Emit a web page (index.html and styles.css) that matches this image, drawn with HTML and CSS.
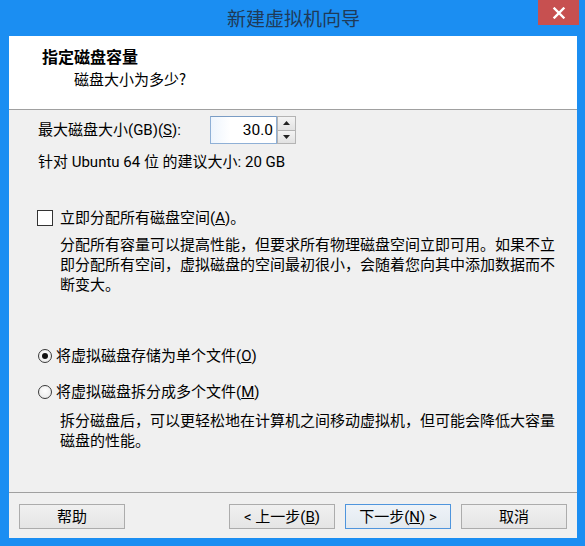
FILE: index.html
```html
<!DOCTYPE html>
<html lang="zh-CN">
<head>
<meta charset="utf-8">
<title>新建虚拟机向导</title>
<link rel="stylesheet" href="styles.css">
</head>
<body>
<div class="window">
  <div class="titlebar">
    <div class="title">新建虚拟机向导</div>
    <div class="close">
      <svg width="14" height="12" viewBox="0 0 14 12"><path d="M2.5 1.5 L11.5 10.5 M11.5 1.5 L2.5 10.5" stroke="#fff" stroke-width="2.4" stroke-linecap="square"/></svg>
    </div>
  </div>
  <div class="client">
    <div class="header">
      <div class="h-title">指定磁盘容量</div>
      <div class="h-sub">磁盘大小为多少?</div>
    </div>
    <div class="content">
      <div class="size-row">
        <span class="size-label">最大磁盘大小(GB)(<u>S</u>):</span>
        <div class="spin">
          <div class="spin-input">30.0</div>
          <div class="spin-btns">
            <div class="spin-btn"><svg width="7" height="4" viewBox="0 0 7 4"><path d="M0 4 L3.5 0 L7 4 Z" fill="#222"/></svg></div>
            <div class="spin-btn"><svg width="7" height="4" viewBox="0 0 7 4"><path d="M0 0 L3.5 4 L7 0 Z" fill="#222"/></svg></div>
          </div>
        </div>
      </div>
      <div class="hint">针对 Ubuntu 64 位 的建议大小: 20 GB</div>
      <label class="check-row">
        <span class="checkbox"></span>
        <span>立即分配所有磁盘空间(<u>A</u>)。</span>
      </label>
      <p class="desc desc1">分配所有容量可以提高性能，但要求所有物理磁盘空间立即可用。如果不立即分配所有空间，虚拟磁盘的空间最初很小，会随着您向其中添加数据而不断变大。</p>
      <label class="radio-row radio1">
        <span class="radio checked"></span>
        <span>将虚拟磁盘存储为单个文件(<u>O</u>)</span>
      </label>
      <label class="radio-row radio2">
        <span class="radio"></span>
        <span>将虚拟磁盘拆分成多个文件(<u>M</u>)</span>
      </label>
      <p class="desc desc2">拆分磁盘后，可以更轻松地在计算机之间移动虚拟机，但可能会降低大容量磁盘的性能。</p>
    </div>
    <div class="footer">
      <button class="btn">帮助</button>
      <div class="spacer"></div>
      <button class="btn">&lt; 上一步(<u>B</u>)</button>
      <button class="btn default">下一步(<u>N</u>) &gt;</button>
      <button class="btn">取消</button>
    </div>
  </div>
</div>
</body>
</html>
```

FILE: styles.css
```css
html, body {
  margin: 0;
  padding: 0;
}

body {
  width: 585px;
  height: 546px;
  overflow: hidden;
  font-family: Roboto, "Noto Sans CJK SC", sans-serif;
  font-size: 15px;
  color: #000;
}

.window {
  width: 585px;
  height: 546px;
  background: #1b8ef2;
  display: flex;
  flex-direction: column;
}

.titlebar {
  position: relative;
  height: 36px;
  flex: none;
  display: flex;
  align-items: center;
  justify-content: center;
}

.title {
  font-family: "Noto Sans CJK SC", sans-serif;
  font-size: 19px;
  color: #1f3a58;
  line-height: 36px;
  margin-left: 2px;
}

.close {
  position: absolute;
  top: 0;
  right: 6px;
  width: 41px;
  height: 25px;
  background: #c75050;
  display: flex;
  align-items: center;
  justify-content: center;
}

.client {
  flex: 1;
  margin: 0 8px 8px 9px;
  background: #f0f0f0;
  display: flex;
  flex-direction: column;
}

.header {
  flex: none;
  background: #fff;
  border-bottom: 1px solid #a0a0a0;
  box-sizing: border-box;
  height: 74px;
  padding: 10px 0 0 33px;
  font-family: "Noto Sans CJK SC", sans-serif;
}

.h-title {
  font-weight: bold;
  font-size: 16px;
  line-height: 20px;
}

.h-sub {
  margin: 3px 0 0 32px;
  font-size: 15px;
  line-height: 20px;
}

.content {
  flex: 1;
  padding: 6px 0 0 29px;
  line-height: 20px;
}

.size-row {
  display: flex;
  align-items: center;
  height: 28px;
}

.size-label {
  width: 172px;
  flex: none;
}

.spin {
  display: flex;
  height: 28px;
}

.spin-input {
  width: 67px;
  height: 28px;
  box-sizing: border-box;
  border: 1px solid #8fb0d6;
  border-top-color: #7a9cc4;
  background: linear-gradient(to right, #eef5fd, #fff 30%);
  text-align: right;
  padding-right: 3px;
  line-height: 26px;
  font-size: 15.5px;
}

.spin-btns {
  display: flex;
  flex-direction: column;
  width: 19px;
}

.spin-btn {
  flex: 1;
  border: 1px solid #b4b4b4;
  background: linear-gradient(#f4f4f4, #e2e2e2);
  display: flex;
  align-items: center;
  justify-content: center;
}

.spin-btn + .spin-btn {
  border-top: none;
}

.hint {
  margin-top: 8px;
}

.check-row {
  display: flex;
  align-items: center;
  margin-top: 36px;
}

.checkbox {
  width: 16px;
  height: 16px;
  box-sizing: border-box;
  border: 1px solid #333;
  background: #fff;
  margin: 0 7px 0 -1px;
  flex: none;
}

.desc {
  margin: 7px 0 0 22px;
  width: 500px;
  line-height: 20px;
}

.radio-row {
  display: flex;
  align-items: center;
}

.radio1 {
  margin-top: 51px;
}

.radio2 {
  margin-top: 16px;
}

.radio {
  width: 14px;
  height: 14px;
  box-sizing: border-box;
  border-radius: 50%;
  border: 1px solid #3a3a3a;
  background: radial-gradient(circle at 50% 40%, #ffffff, #e6e6e6);
  margin: 0 4px 0 0;
  flex: none;
  position: relative;
}

.radio.checked::after {
  content: "";
  position: absolute;
  left: 3px;
  top: 3px;
  width: 6px;
  height: 6px;
  border-radius: 50%;
  background: #111;
}

.desc2 {
  margin-top: 9px;
}

.footer {
  flex: none;
  height: 46px;
  border-top: 1px solid #a0a0a0;
  box-sizing: border-box;
  display: flex;
  align-items: flex-start;
  padding: 11px 10px 0 10px;
  gap: 10px;
}

.spacer {
  flex: 1;
}

.btn {
  width: 106px;
  height: 25px;
  box-sizing: border-box;
  border: 1px solid #acacac;
  background: linear-gradient(#f0f0f0, #e5e5e5);
  font-family: Roboto, "Noto Sans CJK SC", sans-serif;
  font-size: 15px;
  color: #000;
  padding: 0;
  line-height: 22px;
}

.btn.default {
  border-color: #4f95dd;
  background: linear-gradient(#eef3f8, #e3e9ef);
}
```
